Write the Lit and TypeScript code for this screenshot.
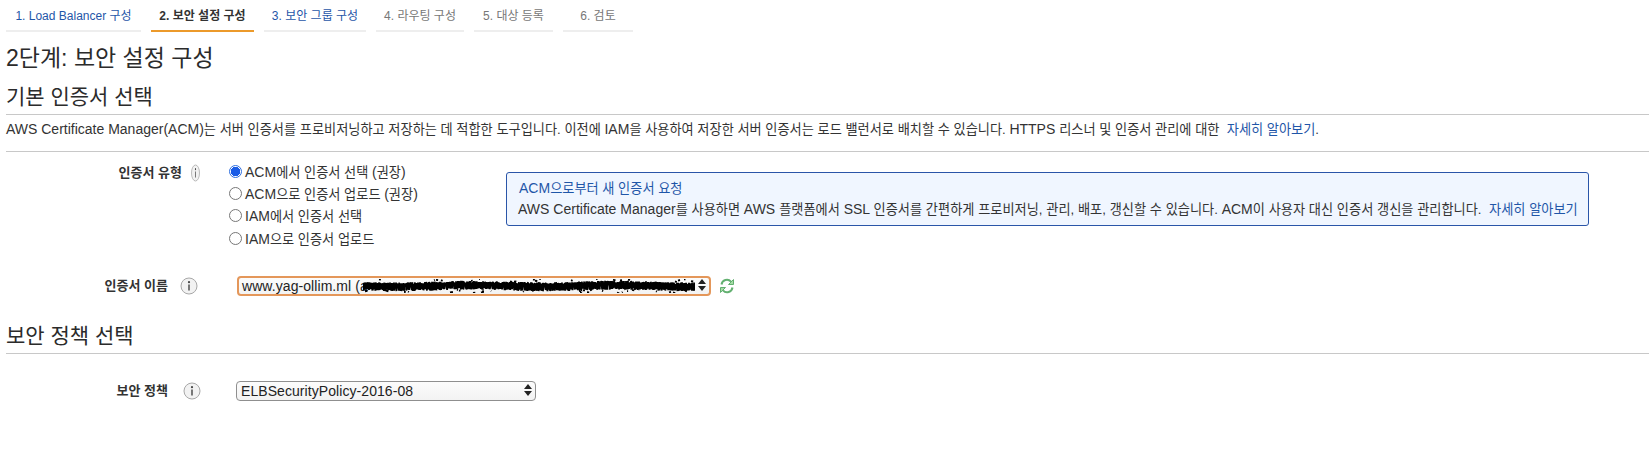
import { LitElement, html, css } from "lit";
import { customElement } from "lit/decorators.js";

function scribble(w: number, h: number) {
  let s = 12345;
  const r = () => ((s = (s * 1103515245 + 12345) & 0x7fffffff) / 0x7fffffff);
  let d = "";
  for (let x = 0; x < w; x += 1) {
    const wob = Math.sin(x / 23) * 0.8;
    const a = 2.5 + wob + r() * 1.8;
    const b = h - 2.5 + wob - r() * 1.8;
    d += `M${x} ${a.toFixed(1)}L${(x + r() * 2 - 1).toFixed(1)} ${b.toFixed(1)}`;
    if (r() > 0.6) {
      const y = r() * h;
      d += `M${x} ${y.toFixed(1)}l${(r() * 3).toFixed(1)} ${(r() * 1.5 - 0.7).toFixed(1)}`;
    }
  }
  return d;
}

/** Wraps Latin runs: the reference's Latin face runs larger than its Korean one. */
function mix(text: string) {
  return text.split(/([A-Za-z0-9()][A-Za-z0-9().\- ]*)/).map((p, i) =>
    i % 2 ? html`<span class="l">${p}</span>` : p
  );
}

const infoIcon = (cls = "") => html`<svg class="info ${cls}" viewBox="0 0 18 18" preserveAspectRatio="none"><circle cx="9" cy="9" r="8" fill="#f2f2f2" stroke="#a8a8a8"/><circle cx="9" cy="5.2" r="1.1" fill="#444"/><path d="M9 7.6v6" stroke="#444" stroke-width="1.4"/></svg>`;
const arrows = html`<svg class="arrows" width="8" height="12" viewBox="0 0 8 12"><path d="M4 0L8 5H0Z M4 12L8 7H0Z" fill="#222"/></svg>`;

@customElement("app-root")
export class AppRoot extends LitElement {
  static styles = css`
    :host { display: block; width: 1649px; height: 475px; background: #fff; overflow: hidden; color: #333;
      font-family: "Liberation Sans", "Noto Sans CJK KR", sans-serif; font-size: 13.2px; }
    a { color: #1f56a8; text-decoration: none; }
    .l { font-size: 14px; }
    .tabs { display: flex; gap: 10px; padding-left: 6px; height: 32px; box-sizing: border-box; }
    .tab { height: 32px; box-sizing: border-box; border-bottom: 2px solid #eee; font-size: 12px; line-height: 32px; text-align: center; color: #777; }
    .tab.link { color: #1f56a8; }
    .tab.on { color: #333; font-weight: 700; border-bottom-color: #ec9a2b; }
    .page { padding-left: 6px; }
    h1 { margin: 0; font-weight: 400; font-size: 23px; line-height: 30px; padding-top: 11px; color: #2b2b2b; }
    h2 { margin: 0; font-weight: 400; font-size: 21px; line-height: 26px; color: #2b2b2b; border-bottom: 1px solid #c8c8c8; }
    h2.first { padding-top: 11px; padding-bottom: 4px; }
    h2.second { margin-top: 27px; padding-bottom: 4px; }
    .desc { height: 36px; line-height: 28px; border-bottom: 1px solid #c8c8c8; white-space: nowrap; }
    .row { display: flex; }
    .label { font-weight: 700; text-align: right; box-sizing: border-box; font-size: 13px; line-height: 18px; white-space: nowrap; }
    .r1 { padding-top: 12px; height: 112px; }
    .r1 .label { width: 176px; }
    .r1 .info-slot { width: 46px; padding-left: 9px; box-sizing: border-box; }
    .info { display: block; width: 18px; height: 18px; }
    .info.narrow { width: 9px; }
    .radios { display: flex; flex-direction: column; gap: 4.4px; width: 278px; flex: none; margin-top: -2px; }
    .radio { display: flex; align-items: center; gap: 3px; height: 18px; white-space: nowrap; }
    .dot { width: 13px; height: 13px; box-sizing: border-box; border: 1px solid #777; border-radius: 50%; background: #fff; flex: none; margin-left: 1px; }
    .dot.on { border: 1px solid #2f6fe0; background: radial-gradient(circle, #1a5ce6 0 4.5px, #fff 5px); }
    .notice { margin-top: 8px; width: 1083px; height: 54px; box-sizing: border-box; border: 1px solid #2a55a8; border-radius: 3px; background: #f0f6ff; padding: 6px 11px; white-space: nowrap; }
    .notice .t { display: block; padding-left: 1px; line-height: 18px; }
    .notice .b { line-height: 22px; word-spacing: 0.1px; }
    .r2 { align-items: center; height: 20px; }
    .r2 .label { width: 162px; }
    .r2 .info-slot { width: 69px; padding-left: 12px; box-sizing: border-box; }
    .r3 { align-items: center; height: 20px; margin-top: 27px; }
    .r3 .label { width: 162px; }
    .r3 .info-slot { width: 68px; padding-left: 15px; box-sizing: border-box; }
    .sel { position: relative; height: 20px; box-sizing: border-box; border-radius: 4px; background: linear-gradient(#fcfcfc, #f3f3f3); padding-left: 4px; line-height: 18px; font-size: 14px; letter-spacing: 0.07px; white-space: nowrap; color: #222; flex: none; }
    .sel.cert { width: 474px; border: 2px solid #e4975a; line-height: 16px; padding-left: 3px; }
    .sel.policy { width: 300px; border: 1px solid #8f8f8f; }
    .arrows { position: absolute; right: 3px; top: 50%; margin-top: -7px; }
    .scrib { position: absolute; left: 124px; top: 1px; }
    .refresh { margin-left: 8px; display: block; }
  `;

  render() {
    return html`
      <div class="tabs">
        <div class="tab link" style="width:135px">1. Load Balancer 구성</div>
        <div class="tab on" style="width:103px">2. 보안 설정 구성</div>
        <div class="tab link" style="width:102px">3. 보안 그룹 구성</div>
        <div class="tab" style="width:88px">4. 라우팅 구성</div>
        <div class="tab" style="width:79px">5. 대상 등록</div>
        <div class="tab" style="width:70px">6. 검토</div>
      </div>
      <div class="page">
        <h1>2단계: 보안 설정 구성</h1>
        <h2 class="first">기본 인증서 선택</h2>
        <div class="desc">${mix("AWS Certificate Manager(ACM)는 서버 인증서를 프로비저닝하고 저장하는 데 적합한 도구입니다. 이전에 IAM을 사용하여 저장한 서버 인증서는 로드 밸런서로 배치할 수 있습니다. HTTPS 리스너 및 인증서 관리에 대한")} <a>&nbsp;자세히 알아보기</a>.</div>
        <div class="row r1">
          <div class="label">인증서 유형</div>
          <div class="info-slot">${infoIcon("narrow")}</div>
          <div class="radios">
            <div class="radio"><span class="dot on"></span><span>${mix("ACM에서 인증서 선택 (권장)")}</span></div>
            <div class="radio"><span class="dot"></span><span>${mix("ACM으로 인증서 업로드 (권장)")}</span></div>
            <div class="radio"><span class="dot"></span><span>${mix("IAM에서 인증서 선택")}</span></div>
            <div class="radio"><span class="dot"></span><span>${mix("IAM으로 인증서 업로드")}</span></div>
          </div>
          <div class="notice">
            <a class="t">${mix("ACM으로부터 새 인증서 요청")}</a>
            <div class="b">${mix("AWS Certificate Manager를 사용하면 AWS 플랫폼에서 SSL 인증서를 간편하게 프로비저닝, 관리, 배포, 갱신할 수 있습니다. ACM이 사용자 대신 인증서 갱신을 관리합니다.")} <a>&nbsp;자세히 알아보기</a></div>
          </div>
        </div>
        <div class="row r2">
          <div class="label">인증서 이름</div>
          <div class="info-slot">${infoIcon()}</div>
          <div class="sel cert">www.yag-ollim.ml (a
            <svg class="scrib" width="332" height="14" viewBox="0 0 332 14"><path d="${scribble(332, 14)}" stroke="#000" stroke-width="1.9" fill="none"/></svg>
            ${arrows}
          </div>
          <svg class="refresh" width="16" height="16" viewBox="0 0 16 16" fill="none" stroke="#62b070" stroke-width="2"><path d="M2.5 6.5A5.5 5.5 0 0 1 12 3.6"/><path d="M13.5 9.5A5.5 5.5 0 0 1 4 12.4"/><path d="M14.5 1.5V6.5H9.5Z" fill="#a5dca5" stroke-width="1"/><path d="M1.5 14.5V9.5H6.5Z" fill="#a5dca5" stroke-width="1"/></svg>
        </div>
        <h2 class="second">보안 정책 선택</h2>
        <div class="row r3">
          <div class="label">보안 정책</div>
          <div class="info-slot">${infoIcon()}</div>
          <div class="sel policy">ELBSecurityPolicy-2016-08${arrows}</div>
        </div>
      </div>
    `;
  }
}
